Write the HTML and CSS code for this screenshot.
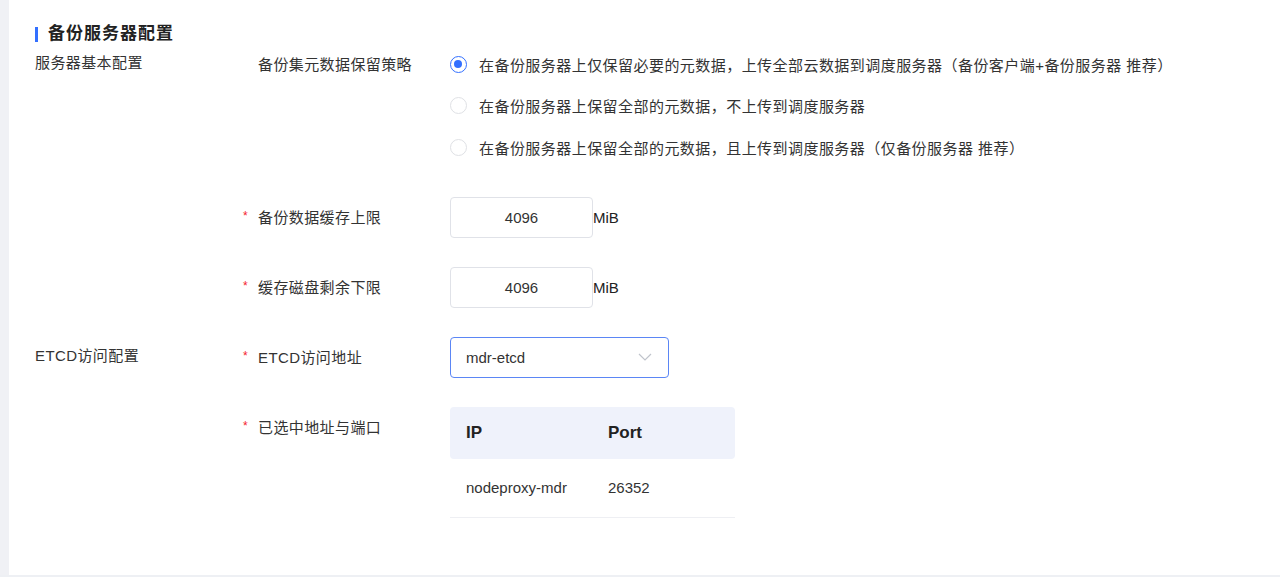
FILE: index.html
```html
<!DOCTYPE html>
<html lang="zh-CN">
  <head>
    <meta charset="UTF-8" />
    <title>备份服务器配置</title>
    <link rel="stylesheet" href="styles.css">
  </head>
  <body>
    <div class="page">
      <div class="side"></div>
      <div class="main">
        <div class="title">备份服务器配置</div>

        <div class="group">
          <div class="group-label">服务器基本配置</div>
          <div class="group-body">
            <div class="item">
              <div class="label">备份集元数据保留策略</div>
              <div class="radios">
                <label class="radio checked"><span class="dot"></span>在备份服务器上仅保留必要的元数据，上传全部云数据到调度服务器（备份客户端+备份服务器 推荐）</label>
                <label class="radio"><span class="dot"></span>在备份服务器上保留全部的元数据，不上传到调度服务器</label>
                <label class="radio"><span class="dot"></span>在备份服务器上保留全部的元数据，且上传到调度服务器（仅备份服务器 推荐）</label>
              </div>
            </div>
            <div class="item">
              <div class="label required">备份数据缓存上限</div>
              <div class="control">
                <div class="input">4096</div>
                <span class="unit">MiB</span>
              </div>
            </div>
            <div class="item">
              <div class="label required">缓存磁盘剩余下限</div>
              <div class="control">
                <div class="input">4096</div>
                <span class="unit">MiB</span>
              </div>
            </div>
          </div>
        </div>

        <div class="group">
          <div class="group-label">ETCD访问配置</div>
          <div class="group-body">
            <div class="item">
              <div class="label required">ETCD访问地址</div>
              <div class="control">
                <div class="select">
                  <span>mdr-etcd</span>
                  <svg width="14" height="8" viewBox="0 0 14 8"><path d="M1 1l6 6 6-6" fill="none" stroke="#c0c4cc" stroke-width="1.2"/></svg>
                </div>
              </div>
            </div>
            <div class="item">
              <div class="label required">已选中地址与端口</div>
              <div class="table">
                <div class="thead">
                  <div class="cell ip">IP</div>
                  <div class="cell">Port</div>
                </div>
                <div class="trow">
                  <div class="cell ip">nodeproxy-mdr</div>
                  <div class="cell">26352</div>
                </div>
              </div>
            </div>
          </div>
        </div>
      </div>
    </div>
  </body>
</html>
```

FILE: styles.css
```css
* {
  margin: 0;
  padding: 0;
  box-sizing: border-box;
}
body {
  font-family: "Liberation Sans", "Noto Sans CJK SC", sans-serif;
  font-size: 15px;
  color: #333;
  background: #fff;
}
.page {
  display: flex;
  height: 577px;
  border-bottom: 2px solid #eef0f4;
}
.side {
  width: 9px;
  background: #f0f1f5;
}
.main {
  flex: 1;
  padding: 24px 0 0 26px;
}
.title {
  font-size: 17px;
  font-weight: bold;
  letter-spacing: 1px;
  line-height: 20px;
  padding-left: 13px;
  position: relative;
  color: #222;
}
.title::before {
  content: "";
  position: absolute;
  left: 0;
  top: 3px;
  width: 2.5px;
  height: 15px;
  background: #3370ff;
}
.group {
  display: flex;
}
.group-label {
  width: 206px;
  line-height: 38px;
  letter-spacing: 0.4px;
}
.group-body {
  flex: 1;
}
.item {
  display: flex;
  margin-bottom: 29px;
}
.label {
  width: 209px;
  padding-left: 17px;
  line-height: 41px;
  letter-spacing: 0.4px;
  position: relative;
}
.label.required::before {
  content: "*";
  color: #f5222d;
  font-size: 12px;
  position: absolute;
  left: 2px;
  top: -1px;
}
.radios {
  display: flex;
  flex-direction: column;
}
.radio {
  display: flex;
  align-items: center;
  height: 41.3px;
  letter-spacing: 0.45px;
}
.dot {
  width: 17px;
  height: 17px;
  border: 1px solid #dfe1e5;
  border-radius: 50%;
  margin-right: 12px;
  position: relative;
}
.radio.checked .dot {
  border: 1.5px solid #3370ff;
}
.radio.checked .dot::after {
  content: "";
  position: absolute;
  left: 3px;
  top: 3px;
  width: 8px;
  height: 8px;
  border-radius: 50%;
  background: #3370ff;
}
.control {
  display: flex;
  align-items: center;
}
.input {
  width: 143px;
  height: 41px;
  border: 1px solid #e0e2e8;
  border-radius: 4px;
  text-align: center;
  line-height: 39px;
}
.unit {
  color: #222;
}
.select {
  width: 219px;
  height: 41px;
  border: 1px solid #5b86f5;
  border-radius: 4px;
  display: flex;
  align-items: center;
  justify-content: space-between;
  padding: 0 16px 0 15px;
}
.table {
  width: 285px;
}
.thead,
.trow {
  display: flex;
}
.thead {
  height: 52px;
  align-items: center;
  background: #eff2fb;
  border-radius: 4px;
  font-size: 17px;
  font-weight: bold;
  color: #222;
}
.trow {
  height: 59px;
  align-items: center;
  border-bottom: 1px solid #eeeff3;
}
.cell {
  padding-left: 16px;
}
.cell.ip {
  width: 142px;
}
```
